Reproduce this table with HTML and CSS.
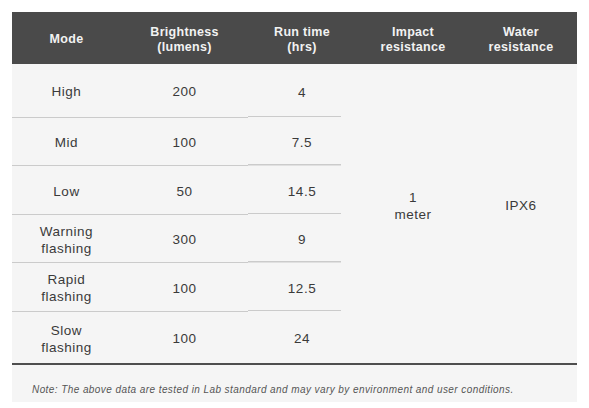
FILE: index.html
```html
<!DOCTYPE html>
<html>
<head>
<meta charset="utf-8">
<link rel="stylesheet" href="styles.css">
</head>
<body>
<div class="sheet">
  <table class="spec">
    <colgroup>
      <col class="c1"><col class="c2"><col class="c3"><col class="c4"><col class="c5">
    </colgroup>
    <thead>
      <tr>
        <th>Mode</th>
        <th>Brightness<br>(lumens)</th>
        <th>Run time<br>(hrs)</th>
        <th>Impact<br>resistance</th>
        <th class="last">Water<br>resistance</th>
      </tr>
    </thead>
    <tbody>
      <tr class="tall">
        <td>High</td><td>200</td><td class="short">4</td>
        <td rowspan="6" class="merged">1<br>meter</td>
        <td rowspan="6" class="merged last">IPX6</td>
      </tr>
      <tr class="r48"><td>Mid</td><td>100</td><td class="short">7.5</td></tr>
      <tr class="r49"><td>Low</td><td>50</td><td class="short">14.5</td></tr>
      <tr class="r48"><td>Warning<br>flashing</td><td>300</td><td class="short">9</td></tr>
      <tr class="r49"><td>Rapid<br>flashing</td><td>100</td><td class="short">12.5</td></tr>
      <tr class="tall end"><td>Slow<br>flashing</td><td>100</td><td>24</td></tr>
    </tbody>
  </table>
  <p class="note">Note: The above data are tested in Lab standard and may vary by environment and user conditions.</p>
</div>
</body>
</html>
```

FILE: styles.css
```css
html, body {
  margin: 0;
  padding: 0;
  background: #ffffff;
}

.sheet {
  margin: 12px 0 0 12px;
  width: 565px;
  background: #f5f5f5;
  font-family: "Liberation Sans", Arial, sans-serif;
}

.spec {
  width: 565px;
  border-collapse: collapse;
  table-layout: fixed;
}

.c1 { width: 109px; }
.c2 { width: 127px; }
.c3 { width: 108px; }
.c4 { width: 114px; }
.c5 { width: 107px; }

.spec th {
  height: 49px;
  padding: 3px 0 0 0;
  background: #4a4a4a;
  color: #f2f2f2;
  font-size: 12.5px;
  font-weight: bold;
  letter-spacing: 0.3px;
  line-height: 15px;
  text-align: center;
  vertical-align: middle;
}

.spec th.last,
.spec td.last {
  padding-right: 5px;
}

.spec td {
  padding: 3px 0 0 0;
  color: #3a3a3a;
  font-size: 13.5px;
  letter-spacing: 0.5px;
  line-height: 17px;
  text-align: center;
  vertical-align: middle;
  border-bottom: 1.5px solid #cbcbcb;
}

.spec td.short {
  border-bottom: none;
  background: linear-gradient(#cbcbcb, #cbcbcb) left bottom / calc(100% - 15px) 1.5px no-repeat;
}

.spec td.merged {
  border-bottom: 2px solid #4e4e4e;
  padding: 0 0 16px 0;
}

.spec td.merged.last {
  padding-right: 5px;
}

.spec tr.end td {
  border-bottom: 2px solid #4e4e4e;
}

.spec tr.tall { height: 53px; }
.spec tr.r48 { height: 48.5px; }
.spec tr.r49 { height: 48.5px; }

.note {
  margin: 0;
  padding: 19px 0 6px 20px;
  color: #555555;
  font-size: 10px;
  font-style: italic;
  letter-spacing: 0.42px;
  line-height: 12px;
}
```
